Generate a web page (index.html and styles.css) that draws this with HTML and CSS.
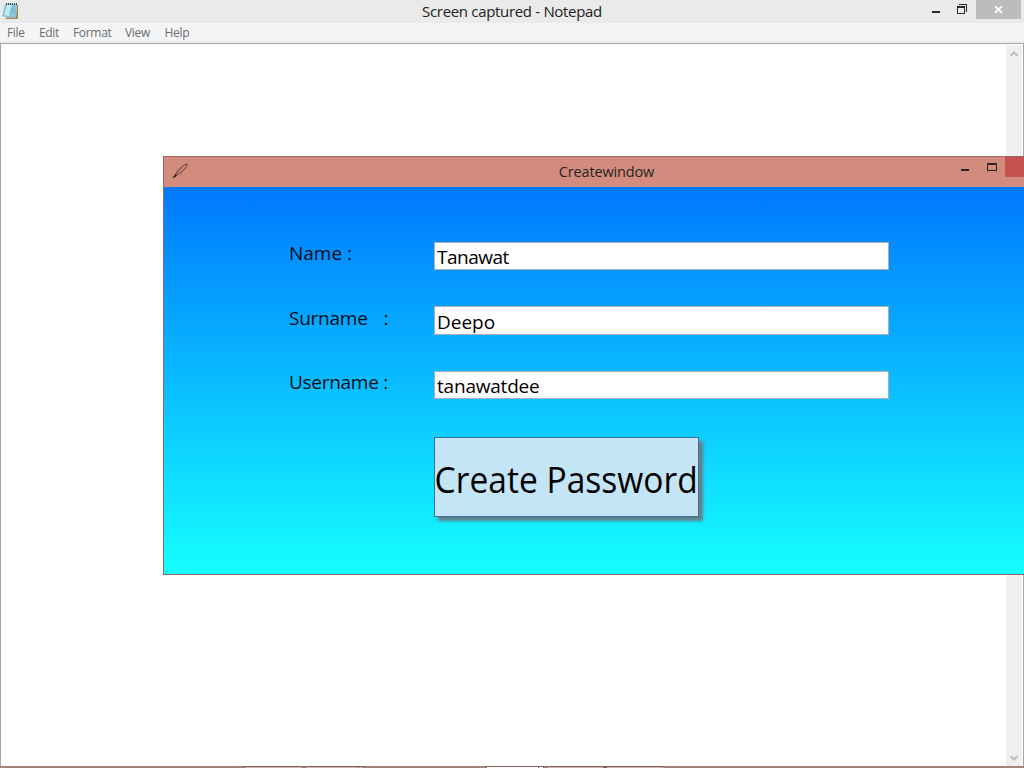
FILE: index.html
```html
<!DOCTYPE html>
<html lang="en">
<head>
<meta charset="utf-8">
<title>Screen captured - Notepad</title>
<link rel="stylesheet" href="styles.css">
</head>
<body>
<main class="notepad">
  <header class="titlebar">
    <svg class="app-icon" width="20" height="23" viewBox="0 0 20 23">
      <path d="M6 18h10.500l1-13v13.500H6z" fill="#fff" stroke="#98835a"/>
      <path d="M5.500 4.500H16.500l-1.500 12.500L2.800 16z" fill="#8bc9d8" stroke="#7dbccb"/>
      <path d="M7 5h5L9 16l-5-1z" fill="#c2e7ef"/>
      <path d="M6 4h11" stroke="#3c4b50" stroke-width="2" stroke-dasharray="1 1"/>
      <path d="M11 7h4M10 9h5M10 11h5M9 13h5" stroke="#62afc2" stroke-width=".6"/>
    </svg>
    <h1 class="title"><span>Screen captured - Notepad</span></h1>
    <div class="controls">
      <svg width="68" height="19" viewBox="0 0 68 19" shape-rendering="crispEdges">
        <path d="M24 11h8v2h-8zM51 4h8v8h-1V5h-7zM49 6h8v8h-8zM50 8v5h6V8z" fill="#2a2a2a" fill-rule="evenodd"/>
      </svg>
      <div class="close">
        <svg width="9" height="7" viewBox="0 0 9 7"><path d="M1 0l7 7M8 0L1 7" stroke="#fff" stroke-width="1.8"/></svg>
      </div>
    </div>
  </header>
  <nav class="menu"><span>File</span><span>Edit</span><span>Format</span><span>View</span><span>Help</span></nav>
  <section class="document">
    <div class="scrollbar">
      <svg width="8" height="6" viewBox="0 0 8 6"><path d="M.5 5L4 1.500 7.500 5" fill="none" stroke="#bdbdbd" stroke-width="2"/></svg>
      <svg width="8" height="6" viewBox="0 0 8 6"><path d="M.5 1L4 4.500 7.500 1" fill="none" stroke="#bdbdbd" stroke-width="2"/></svg>
    </div>
  </section>
  <footer class="taskbar">
    <svg width="1024" height="2" viewBox="0 0 1024 2" shape-rendering="crispEdges">
      <path d="M244 0h59v2h-59zM305 0h59v2h-59zM603 0h60v2h-60zM546 0h58v2h-58zM486 0h58v2h-58z" fill="#80605c"/>
      <path d="M245 1h57v1h-57zM306 1h52v1h-52zM359 1h4v1h-4zM547 1h56v1h-56zM607 1h56v1h-56z" fill="#ceb8b6"/>
      <path d="M487 1h51v1h-51zM539 1h4v1h-4z" fill="#fff"/>
    </svg>
  </footer>
</main>

<section class="dialog">
  <header class="dialog-bar">
    <svg class="feather" width="18" height="18" viewBox="0 0 18 18">
      <path d="M2.500 15l2-4.500C7 7 12 2 15 2c1 2-5 9-9.500 10.500z" fill="none" stroke="#5c3c36"/>
      <path d="M1.500 15.500L11 5" stroke="#70514a" stroke-width=".6"/>
      <path d="M1.200 15.800l2.300-3.300 1 1z" fill="#222" stroke="#222"/>
    </svg>
    <h2 class="dialog-title"><span>Createwindow</span></h2>
    <div class="dialog-controls">
      <svg width="47" height="20" viewBox="0 0 47 20" shape-rendering="crispEdges">
        <path d="M3 12h8v2H3zM29 6h10v8H29zM30 8v5h8V8z" fill="#2a2424" fill-rule="evenodd"/>
      </svg>
      <div class="dialog-close"></div>
    </div>
  </header>
  <form class="form">
    <label class="label" for="name">Name :</label>
    <input class="field f-name" id="name" value="Tanawat">
    <label class="label l-surname" for="surname">Surname<span class="colon">:</span></label>
    <input class="field f-surname" id="surname" value="Deepo">
    <label class="label l-username" for="username">Username :</label>
    <input class="field f-username" id="username" value="tanawatdee">
    <button class="create" type="button"><span>Create Password</span></button>
  </form>
</section>
</body>
</html>
```
FILE: styles.css
```css
* { box-sizing: border-box; }
body { margin: 0; width: 1024px; height: 768px; overflow: hidden; position: relative; font-family: "Open Sans", "Noto Sans", sans-serif; color: #000; background: #fff; }
h1, h2 { margin: 0; font-weight: 400; }
svg { display: block; }
.notepad { display: flex; flex-direction: column; height: 768px; }
.titlebar { display: grid; grid-template-columns: 116px 1fr 116px; height: 23px; background: #eaeaea; }
.title { text-align: center; font-size: 15px; line-height: 23px; letter-spacing: -.32px; color: #222; white-space: nowrap; }
.controls { display: flex; justify-content: flex-end; padding-right: 3px; }
.controls > svg { flex: none; }
.close { width: 45px; height: 19px; flex: none; background: #bcbcbc; display: flex; align-items: center; justify-content: center; }
.menu { display: grid; grid-template-columns: 32px 34px 52px 39.500px 40px; padding-left: 7px; height: 20px; background: #f4f5f7; border-bottom: 2px solid #e9ebed; font-size: 12px; line-height: 20px; letter-spacing: -.32px; color: #6d6d6d; white-space: nowrap; }
.document { height: 723px; background: #fff; border: 1px solid #a5a5a5; border-bottom: 0; padding: 1px 1px 0 0; display: flex; justify-content: flex-end; }
.scrollbar { width: 16px; height: 721px; background: #efefef; display: flex; flex-direction: column; align-items: center; justify-content: space-between; padding: 6px 0 5px; }
.taskbar { height: 2px; background: #a6827e; }
.dialog { position: absolute; left: 163px; top: 156px; width: 861px; height: 419px; border: 1px solid #94675f; border-right: 0; background: #d38b7d; }
.dialog-bar { height: 30px; display: grid; grid-template-columns: 66px 1fr 66px; }
.feather { margin: 5px 0 0 8px; }
.dialog-title { font-size: 14.5px; line-height: 30px; letter-spacing: -.15px; padding-left: 25px; text-align: center; color: #242424; white-space: nowrap; }
.dialog-controls { display: flex; justify-content: flex-end; }
.dialog-controls > svg { flex: none; }
.dialog-close { width: 19px; height: 20px; flex: none; background: #c75050; }
.form { height: 387px; background: linear-gradient(#0078ff, #14ffff); padding: 55px 0 0 125px; display: grid; grid-template-columns: 145px 455px; grid-template-rows: 64px 65px 66px 80px; align-items: start; }
.label { font-size: 19px; line-height: 22px; white-space: nowrap; color: #050c14; }
.l-surname { padding-top: 1px; letter-spacing: -.25px; }
.l-username { letter-spacing: -.28px; }
.colon { margin-left: 16px; }
.field { width: 455px; height: 28px; border: 1px solid #aaadb3; border-radius: 0; background: #fff; padding: 2px 2px 0; margin: 0; font: 19px/25px "Open Sans", "Noto Sans", sans-serif; color: #000; outline: 0; }
.f-name { letter-spacing: -.5px; }
.f-surname { height: 29px; }
.f-username { letter-spacing: -.2px; }
.create { grid-column: 2; width: 265px; height: 80px; padding: 5px 0 0; border: 1px solid #3c7199; border-radius: 0; background: #c4e5f6; box-shadow: 4px 4px 3px #647e88; font: 36px/74px "Open Sans", "Noto Sans", sans-serif; color: #000; white-space: nowrap; display: flex; justify-content: center; }
.create span { display: block; flex: none; transform: scaleX(.932); }
```
